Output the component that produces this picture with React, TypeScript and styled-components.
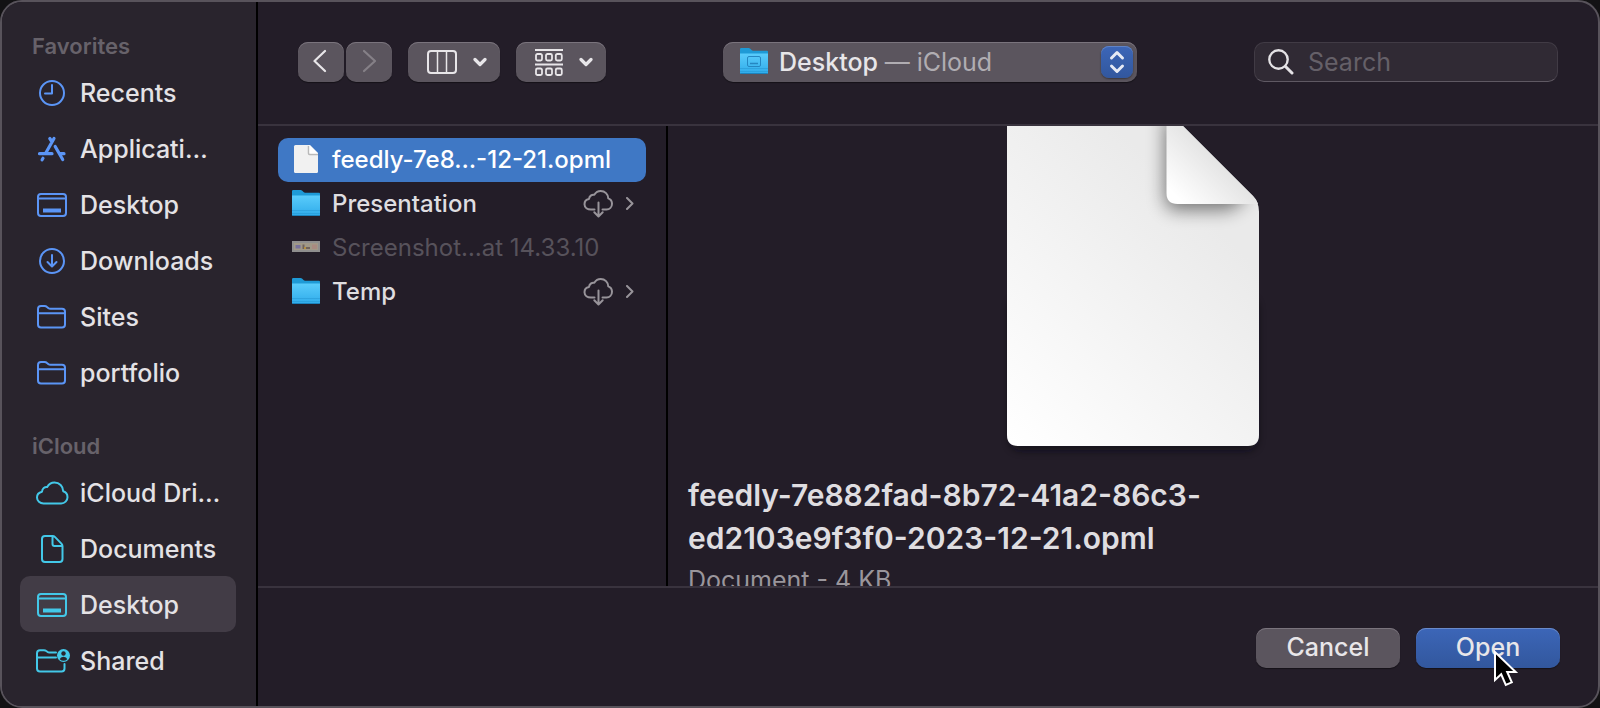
import React, { useState } from "react";
import styled, { createGlobalStyle, css } from "styled-components";

const GlobalStyle = createGlobalStyle`
  *, *::before, *::after { box-sizing: border-box; }
  body {
    margin: 0;
    background: #131214;
    color: #e4e2e5;
    font-family: Inter, "Liberation Sans", sans-serif;
    font-size: 25px;
    line-height: 32px;
  }
  button, input, select { font: inherit; color: inherit; }
  svg { display: block; flex: none; }
`;

const Window = styled.div`
  display: grid;
  grid-template-columns: 256px minmax(0, 1fr);
  min-height: 100vh;
  border: 2px solid #58535b;
  border-radius: 22px;
  overflow: hidden;
  background: #231d28;
`;

const Sidebar = styled.nav`
  padding: 26px 18px 0;
  background: #29242d;
  border-right: 2px solid #000;
`;

const SidebarGroup = styled.section`
  & + & { margin-top: 28px; }
`;

const GroupTitle = styled.h2`
  margin: 0;
  padding: 0 12px;
  font-size: 22px;
  line-height: 36px;
  font-weight: 600;
  color: #67626a;
`;

const PlainList = styled.ul`
  margin: 0;
  padding: 0;
  list-style: none;
`;

const Place = styled.button<{ $tint: string; $selected?: boolean }>`
  display: flex;
  align-items: center;
  gap: 10px;
  width: 216px;
  height: 56px;
  padding: 2px 0 0 14px;
  border: 0;
  border-radius: 10px;
  background: ${(p) => (p.$selected ? "#423c46" : "transparent")};
  font-weight: 500;
  text-align: left;
  white-space: nowrap;

  svg { color: ${(p) => p.$tint}; }
  span { color: #e4e2e5; }
`;

const Main = styled.main`
  display: grid;
  grid-template-rows: 124px minmax(0, 1fr) 120px;
  height: calc(100vh - 4px);
`;

const Toolbar = styled.header`
  display: flex;
  align-items: flex-start;
  justify-content: space-between;
  padding: 40px 40px 0;
  border-bottom: 2px solid #39333e;
`;

const ToolGroup = styled.div`
  display: flex;
  gap: 16px;
`;

const NavPair = styled.div`
  display: flex;
  gap: 2px;
`;

const raised = css`
  height: 40px;
  border: 0;
  border-radius: 10px;
  background: #5b555e;
  box-shadow: inset 0 1px 0 #7a747d, 0 1px 1px rgba(0, 0, 0, 0.4);
`;

const NavButton = styled.button`
  ${raised}
  display: flex;
  align-items: center;
  justify-content: center;
  width: 46px;
  padding: 0 0 2px;
  color: #e8e6e9;

  &:disabled { color: #858087; }
`;

const MenuButton = styled.button`
  ${raised}
  display: flex;
  align-items: center;
  gap: 16px;
  padding: 0 13px 0 19px;
  color: #e8e6e9;
`;

const LocationPicker = styled.label`
  ${raised}
  position: relative;
  display: flex;
  align-items: center;
  gap: 11px;
  flex: 0 1 414px;
  padding: 0 4px 0 17px;
  font-weight: 500;
  white-space: nowrap;

  select {
    position: absolute;
    inset: 0;
    width: 100%;
    opacity: 0;
  }
`;

const LocationName = styled.span`
  flex: 1;
  color: #e8e6e9;

  em {
    font-style: normal;
    font-weight: 400;
    color: #b0adb2;
  }
`;

const Stepper = styled.span`
  display: flex;
  align-items: center;
  justify-content: center;
  width: 32px;
  height: 32px;
  border-radius: 8px;
  color: #e6eaf4;
  background: linear-gradient(#3c66b8, #32579d);
  box-shadow: inset 0 1px 0 #6083c6, 0 1px 2px rgba(0, 0, 0, 0.4);
`;

const SearchBox = styled.label`
  display: flex;
  align-items: center;
  gap: 14px;
  width: 304px;
  height: 40px;
  padding: 0 13px;
  border: 1px solid #413b45;
  border-bottom-color: #5f5963;
  border-radius: 10px;
  background: #302a34;
  color: #e4e2e5;

  input {
    flex: 1;
    min-width: 0;
    padding: 0;
    border: 0;
    outline: 0;
    background: transparent;
  }
  input::placeholder { color: #656068; opacity: 1; }
`;

const Browser = styled.div`
  display: grid;
  grid-template-columns: 410px minmax(0, 1fr);
  overflow: hidden;
`;

const FileColumn = styled(PlainList)`
  padding: 12px 20px;
  border-right: 2px solid #000;
`;

const FileRow = styled.button<{ $selected?: boolean }>`
  display: flex;
  align-items: center;
  gap: 12px;
  width: 100%;
  height: 44px;
  padding: 0 12px 0 14px;
  border: 0;
  border-radius: 10px;
  background: ${(p) => (p.$selected ? "#3f78c5" : "transparent")};
  color: ${(p) => (p.$selected ? "#fff" : "#dfdde0")};
  font-size: 24px;
  font-weight: 500;
  text-align: left;
  white-space: nowrap;

  &:disabled { color: #57525b; font-weight: 400; }
`;

const FileName = styled.span`
  flex: 1;
`;

const Preview = styled.section`
  overflow: hidden;
  padding: 0 20px;

  & > svg { margin: -28px auto 0; }
`;

const PreviewName = styled.h1`
  margin: 6px 0 0;
  max-width: 540px;
  font-size: 30px;
  line-height: 43px;
  font-weight: 600;
  color: #dfdde0;
`;

const PreviewKind = styled.p`
  margin: 4px 0 0;
  color: #9a969c;
`;

const Footer = styled.footer`
  display: flex;
  justify-content: flex-end;
  gap: 16px;
  padding: 40px 38px 0;
  border-top: 2px solid #39333e;
`;

const ActionButton = styled.button<{ $primary?: boolean }>`
  ${raised}
  position: relative;
  width: 144px;
  padding: 0 0 2px;
  font-weight: 500;
  color: #e8e6e9;
  ${(p) =>
    p.$primary &&
    css`
      background: linear-gradient(#3c66b8, #32579d);
      box-shadow: inset 0 1px 0 #6a8aca, 0 1px 1px rgba(0, 0, 0, 0.4);
    `}
`;

const Pointer = styled.svg`
  position: absolute;
  left: 76px;
  top: 21px;
`;

const line = {
  fill: "none",
  stroke: "currentColor",
  strokeWidth: 2,
  strokeLinecap: "round",
  strokeLinejoin: "round",
} as const;

const Glyph = ({ children }: { children: React.ReactNode }) => (
  <svg width="36" height="32" viewBox="0 0 36 32" {...line} aria-hidden="true">
    {children}
  </svg>
);

const ClockIcon = () => (
  <Glyph>
    <circle cx="18" cy="16" r="12" />
    <path d="M18 8v8.500h-7" />
  </Glyph>
);

const AppsIcon = () => (
  <Glyph>
    <g strokeWidth="3.200">
      <path d="M15.800 5.500l2 3M20 5.500L11.500 20.500M9 25.300l-.9 1.500M5.500 20.700h12.500M26.500 20.700h3.500M21.200 13.500l7.500 13" />
    </g>
  </Glyph>
);

const DesktopIcon = () => (
  <Glyph>
    <rect x="4" y="5" width="28" height="22" rx="3" />
    <path d="M4 9.500h28" />
    <path d="M9 21.500h18" strokeWidth="4" strokeLinecap="butt" />
  </Glyph>
);

const DownloadIcon = () => (
  <Glyph>
    <circle cx="18" cy="16" r="12" />
    <path d="M18 10v11M13.500 17l4.500 4.500 4.500-4.500" />
  </Glyph>
);

const FolderLineIcon = () => (
  <Glyph>
    <path d="M4 23.500V8q0-3 3-3h3.500q1.500 0 2.500 1l1.200 1q1 .8 2.300.8H28q3 0 3 3v12.700q0 3-3 3H7q-3 0-3-3zM4 12.300h27" />
  </Glyph>
);

const CloudIcon = () => (
  <Glyph>
    <path d="M9.500 26.500C6 26.500 3 23.900 3 20.500c0-3 2.200-5.200 5-5.800.2-3.200 2.700-5 5.200-4.700C14.800 7.200 17.500 5.600 20.500 5.600c4.900 0 8.600 3.700 8.700 8.600 2.700.8 4.300 3.200 4.300 6 0 3.500-2.900 6.300-6.300 6.300z" />
  </Glyph>
);

const DocumentIcon = () => (
  <Glyph>
    <path d="M8 26V6q0-3 3-3h7.500q1.500 0 2.600 1.100l6.300 6.500q1.100 1.200 1.100 2.600V26q0 3-3 3H11q-3 0-3-3zM18.500 3.500V11q0 2 2 2h7.500" />
  </Glyph>
);

const SharedIcon = () => (
  <Glyph>
    <path d="M22 7.500h-6.500q-1.300 0-2.200-.8l-1-.7q-1-.8-2.300-.8H6q-3 0-3 3V23.500q0 3 3 3h21.500q3 0 3-3V19M3 12.500h19" />
    <circle cx="29.500" cy="10.500" r="6.500" fill="currentColor" stroke="none" />
    <circle cx="29.500" cy="8.500" r="2.200" fill="#29242d" stroke="none" />
    <path d="M25.700 14.300q.7-2.500 3.800-2.500t3.800 2.500q-1.700 1.500-3.800 1.500t-3.800-1.500z" fill="#29242d" stroke="none" />
  </Glyph>
);

const ColumnsIcon = () => (
  <svg width="30" height="24" viewBox="0 0 30 24" {...line} aria-hidden="true">
    <rect x="1" y="1" width="28" height="22" rx="3" />
    <path d="M10.500 1v22M19.500 1v22" strokeWidth="1.500" />
  </svg>
);

const GroupIcon = () => (
  <svg width="28" height="28" viewBox="0 0 28 28" {...line} strokeWidth="1.800" aria-hidden="true">
    <path d="M0 2h28M0 16.500h28" strokeLinecap="butt" />
    {[6, 20.5].map((y) =>
      [1, 11, 20.8].map((x) => <rect key={`${x}-${y}`} x={x} y={y} width="6" height="6.500" rx="1.500" />)
    )}
  </svg>
);

const DownIcon = () => (
  <svg width="14" height="10" viewBox="0 0 14 10" {...line} strokeWidth="3.200" aria-hidden="true">
    <path d="M2 2.500l5 5 5-5" />
  </svg>
);

const ArrowIcon = ({ flip }: { flip?: boolean }) => (
  <svg width="16" height="24" viewBox="0 0 16 24" {...line} strokeWidth="2.200" aria-hidden="true">
    <path d={flip ? "M3 2l11 10L3 22" : "M12 2L1.500 12 12 22"} />
  </svg>
);

const StepperIcon = () => (
  <svg width="16" height="24" viewBox="0 0 16 24" {...line} strokeWidth="3" aria-hidden="true">
    <path d="M2.500 8L8 2.500 13.500 8M2.500 16L8 21.500l5.500-5.500" />
  </svg>
);

const SearchIcon = () => (
  <svg width="26" height="26" viewBox="0 0 26 26" {...line} strokeWidth="2.400" aria-hidden="true">
    <circle cx="10.500" cy="10.500" r="9.200" />
    <path d="M17.500 17.500l6.500 6.500" strokeWidth="3" />
  </svg>
);

const FolderIcon = ({ desktop }: { desktop?: boolean }) => (
  <svg width="28" height="28" viewBox="0 0 28 28" aria-hidden="true">
    <defs>
      <linearGradient id="folderFront" x1="0" y1="0" x2="0" y2="1">
        <stop offset="0" stopColor="#5accfb" />
        <stop offset="1" stopColor="#2fabea" />
      </linearGradient>
    </defs>
    <path d="M0 1.200Q0 0 1.200 0H8.500q1 0 1.800.8l1.200 1.300q.7.600 1.700.6H27q1 0 1 1V9H0z" fill="#1e9ad6" />
    <path d="M0 5.500h28V24.500q0 1.500-1.500 1.500h-25Q0 26 0 24.500z" fill="url(#folderFront)" />
    <path d="M0 20.500h28M0 23.500h28" stroke="#2496d2" strokeWidth="1" opacity=".5" />
    <path d="M.5 25.500h27" stroke="#1b83bd" strokeWidth="1" />
    {desktop && (
      <g fill="none" stroke="#2587c2">
        <rect x="7.500" y="8.500" width="13" height="10" rx="1.500" />
        <path d="M10 15.500h8" strokeWidth="1.500" />
      </g>
    )}
  </svg>
);

const PageIcon = () => (
  <svg width="28" height="30" viewBox="0 0 28 30" aria-hidden="true">
    <path d="M2 1.500Q2 0 3.500 0H18l8 8v18.500q0 1.500-1.500 1.500h-21Q2 28 2 26.500z" fill="#f1f1f1" />
    <path d="M16.500 1v7.500q0 1 1 1H26" fill="none" stroke="#b9b9b9" strokeWidth="1.500" />
    <path d="M17.500 0l8.500 8.500h-7.500q-1 0-1-1z" fill="#fff" />
  </svg>
);

const ShotIcon = () => (
  <svg width="28" height="14" viewBox="0 0 28 14" aria-hidden="true">
    <rect width="28" height="11" fill="#8f8e8e" />
    <rect x="2" y="2" width="24" height="7" fill="#a09887" />
    <path d="M3.500 4h5v3.500h-5z" fill="#77709b" />
    <path d="M10.500 3.500h2V8h-2zM13 6h5v2h-5z" fill="#6f625c" />
    <path d="M12 6h2v2h-2z" fill="#b58f3f" />
    <path d="M20 3.500h5V8h-5z" fill="#a98a80" />
  </svg>
);

const CloudDownIcon = () => (
  <svg width="30" height="28" viewBox="0 0 30 28" {...line} color="#98949a" aria-hidden="true">
    <path d="M11.500 19.500H8C4.500 19.500 1.500 17.500 1.500 14.300c0-2.800 2-4.900 4.500-5.300.3-2.900 2.700-4.700 5.300-4.200C12.800 2.300 15.200 1 17.700 1c4.200 0 7.500 3.200 7.600 7.400 2.300.8 3.700 2.900 3.700 5.400 0 3.300-2.400 5.700-5.500 5.700H19.500" />
    <path d="M15.500 12.500V26M11.300 22.300l4.200 4.200 4.200-4.200" />
  </svg>
);

const RowChevron = () => (
  <svg width="9" height="14" viewBox="0 0 9 14" {...line} color="#98949a" aria-hidden="true">
    <path d="M2 1L7.500 6.500 2 12" />
  </svg>
);

const LargePage = () => (
  <svg width="270" height="370" viewBox="0 0 270 370" aria-hidden="true">
    <defs>
      <linearGradient id="sheet" gradientUnits="userSpaceOnUse" x1="30" y1="360" x2="240" y2="150">
        <stop offset="0" stopColor="#ffffff" />
        <stop offset="1" stopColor="#eaeaea" />
      </linearGradient>
      <linearGradient id="fold" gradientUnits="userSpaceOnUse" x1="178" y1="98" x2="217" y2="59">
        <stop offset="0" stopColor="#ffffff" />
        <stop offset="1" stopColor="#e4e4e4" />
      </linearGradient>
      <clipPath id="sheetClip">
        <path d="M9 0H157L255 98q6 6 6 16V337q0 11-11 11H20q-11 0-11-11z" />
      </clipPath>
      <filter id="soft" x="-50%" y="-50%" width="200%" height="200%">
        <feGaussianBlur stdDeviation="9" />
      </filter>
      <filter id="ground" x="-20%" y="-20%" width="140%" height="140%">
        <feGaussianBlur stdDeviation="4" />
      </filter>
    </defs>
    <rect x="12" y="200" width="247" height="152" rx="11" fill="#0f0c12" opacity=".7" filter="url(#ground)" />
    <g clipPath="url(#sheetClip)">
      <path d="M0 0h270v370H0z" fill="url(#sheet)" />
      <path d="M167 0V98q0 14 12 14H232L250 98 152 0z" fill="#000" opacity=".5" filter="url(#soft)" />
    </g>
    <path d="M168.500 11.500V95q0 11 11 11H260q-1-4-5-8z" fill="url(#fold)" />
  </svg>
);

const PointerIcon = () => (
  <Pointer width="28" height="40" viewBox="0 0 28 40" aria-hidden="true">
    <path d="M3 3v28l6.200-5.700 4.600 10.600 6-2.600-4.600-10.300h8.500z" fill="#000" stroke="#fff" strokeWidth="2" />
  </Pointer>
);

const BLUE = "#5b95f6";
const CYAN = "#43c8e8";

const groups = [
  {
    title: "Favorites",
    tint: BLUE,
    places: [
      { name: "Recents", icon: <ClockIcon /> },
      { name: "Applicati…", icon: <AppsIcon /> },
      { name: "Desktop", icon: <DesktopIcon /> },
      { name: "Downloads", icon: <DownloadIcon /> },
      { name: "Sites", icon: <FolderLineIcon /> },
      { name: "portfolio", icon: <FolderLineIcon /> },
    ],
  },
  {
    title: "iCloud",
    tint: CYAN,
    places: [
      { name: "iCloud Dri…", icon: <CloudIcon /> },
      { name: "Documents", icon: <DocumentIcon /> },
      { name: "Desktop", icon: <DesktopIcon />, selected: true },
      { name: "Shared", icon: <SharedIcon /> },
    ],
  },
];

const files = [
  { name: "feedly-7e8…-12-21.opml", icon: <PageIcon />, selected: true },
  { name: "Presentation", icon: <FolderIcon />, folder: true },
  { name: "Screenshot…at 14.33.10", icon: <ShotIcon />, disabled: true },
  { name: "Temp", icon: <FolderIcon />, folder: true },
];

export default function App() {
  const [query, setQuery] = useState("");

  return (
    <>
      <GlobalStyle />
      <Window>
        <Sidebar aria-label="Places">
          {groups.map((group) => (
            <SidebarGroup key={group.title}>
              <GroupTitle>{group.title}</GroupTitle>
              <PlainList>
                {group.places.map((place) => (
                  <li key={place.name}>
                    <Place type="button" $tint={group.tint} $selected={"selected" in place}>
                      {place.icon}
                      <span>{place.name}</span>
                    </Place>
                  </li>
                ))}
              </PlainList>
            </SidebarGroup>
          ))}
        </Sidebar>

        <Main>
          <Toolbar>
            <ToolGroup>
              <NavPair>
                <NavButton type="button" aria-label="Back">
                  <ArrowIcon />
                </NavButton>
                <NavButton type="button" aria-label="Forward" disabled>
                  <ArrowIcon flip />
                </NavButton>
              </NavPair>
              <MenuButton type="button" aria-label="View" aria-haspopup="menu">
                <ColumnsIcon />
                <DownIcon />
              </MenuButton>
              <MenuButton type="button" aria-label="Group" aria-haspopup="menu">
                <GroupIcon />
                <DownIcon />
              </MenuButton>
            </ToolGroup>

            <LocationPicker>
              <FolderIcon desktop />
              <LocationName>
                Desktop <em>— iCloud</em>
              </LocationName>
              <Stepper>
                <StepperIcon />
              </Stepper>
              <select aria-label="Location">
                <option>Desktop — iCloud</option>
              </select>
            </LocationPicker>

            <SearchBox>
              <SearchIcon />
              <input
                type="text"
                aria-label="Search"
                placeholder="Search"
                value={query}
                onChange={(e) => setQuery(e.target.value)}
              />
            </SearchBox>
          </Toolbar>

          <Browser>
            <FileColumn>
              {files.map((file) => (
                <li key={file.name}>
                  <FileRow type="button" $selected={file.selected} disabled={file.disabled}>
                    {file.icon}
                    <FileName>{file.name}</FileName>
                    {file.folder && <CloudDownIcon />}
                    {file.folder && <RowChevron />}
                  </FileRow>
                </li>
              ))}
            </FileColumn>
            <Preview>
              <LargePage />
              <PreviewName>feedly-7e882fad-8b72-41a2-86c3-ed2103e9f3f0-2023-12-21.opml</PreviewName>
              <PreviewKind>Document - 4 KB</PreviewKind>
            </Preview>
          </Browser>

          <Footer>
            <ActionButton type="button">Cancel</ActionButton>
            <ActionButton type="button" $primary>
              Open
              <PointerIcon />
            </ActionButton>
          </Footer>
        </Main>
      </Window>
    </>
  );
}
